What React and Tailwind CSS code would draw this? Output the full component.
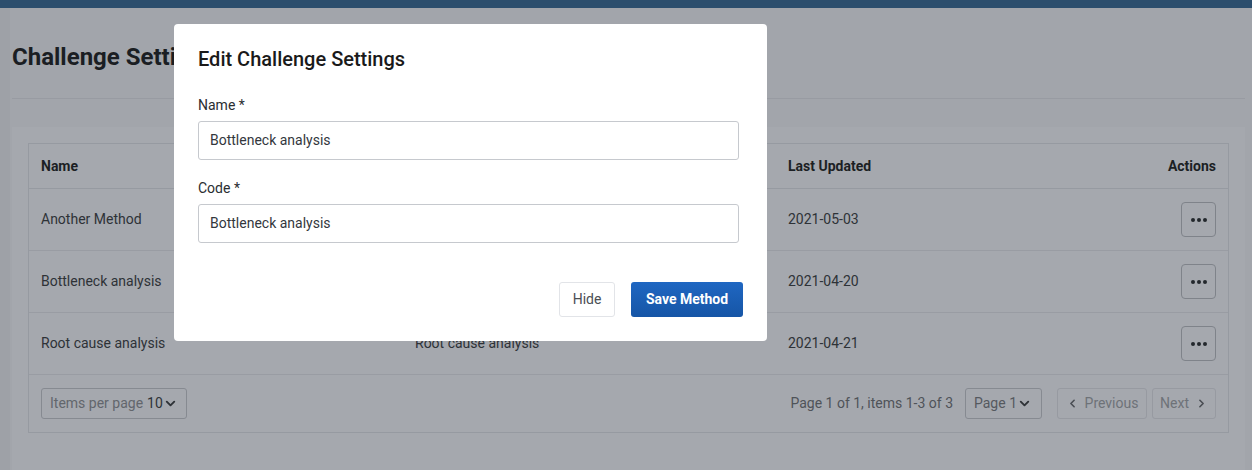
import React from "react";
import { ChevronDown, ChevronLeft, ChevronRight } from "lucide-react";

const rows = [
  { name: "Another Method", code: "Another Method", date: "2021-05-03" },
  { name: "Bottleneck analysis", code: "Bottleneck analysis", date: "2021-04-20" },
  { name: "Root cause analysis", code: "Root cause analysis", date: "2021-04-21" },
];

function Dots() {
  return (
    <button className="w-[35px] h-[35px] rounded-[4px] border border-[#7f838a] flex items-center justify-center gap-[2px]">
      <span className="w-[4px] h-[4px] rounded-full bg-[#23272c]" />
      <span className="w-[4px] h-[4px] rounded-full bg-[#23272c]" />
      <span className="w-[4px] h-[4px] rounded-full bg-[#23272c]" />
    </button>
  );
}

export default function App() {
  return (
    <div
      className="relative w-[1252px] h-[470px] overflow-hidden bg-[#a2a5ab] flex flex-col"
      style={{ fontFamily: "Roboto, 'Noto Sans', sans-serif" }}
    >
      <div className="h-[8px] bg-[#2c4e6d] shrink-0" />
      <div className="flex flex-1">
        <div className="w-[10px] bg-[#9ea1a7] shrink-0" />
        <div className="flex-1 flex flex-col pl-[2px] pr-[7px]">
          <div className="pt-[35px] pb-[27px] border-b border-[#989ba2]">
            <h1 className="text-[24px] leading-[28px] font-bold text-[#1b1e23]">
              Challenge Settings
            </h1>
          </div>
          <div className="mt-[28px] bg-[#a5a8ae] p-4 flex-1">
            <div className="border border-[#969aa1] text-[14px] text-[#2e3237]">
              <div className="h-[45px] grid grid-cols-[374px_373px_1fr_120px] items-center px-3 border-b border-[#969aa1] font-bold text-[#1c1f24]">
                <div>Name</div>
                <div>Code</div>
                <div>Last Updated</div>
                <div className="text-right">Actions</div>
              </div>
              {rows.map((r) => (
                <div
                  key={r.name}
                  className="h-[62px] grid grid-cols-[374px_373px_1fr_120px] items-center px-3 border-b border-[#999ca3]"
                >
                  <div>{r.name}</div>
                  <div>{r.code}</div>
                  <div>{r.date}</div>
                  <div className="flex justify-end">
                    <Dots />
                  </div>
                </div>
              ))}
              <div className="h-[57px] flex items-center px-3">
                <div className="h-[31px] px-[8px] border border-[#868a91] rounded-[3px] flex items-center text-[14px]">
                  <span className="text-[#62666c]">Items per page</span>
                  <span className="ml-[4px] text-[#2e3237]">10</span>
                  <ChevronDown size={15} strokeWidth={3} className="text-[#2e3237]" />
                </div>
                <div className="flex-1" />
                <span className="text-[#4f5359] mr-[12px]">Page 1 of 1, items 1-3 of 3</span>
                <div className="h-[31px] w-[77px] px-[8px] border border-[#868a91] rounded-[3px] flex items-center">
                  <span className="text-[#55595f]">Page 1</span>
                  <ChevronDown size={15} strokeWidth={3} className="text-[#2e3237]" />
                </div>
                <button className="ml-[15px] h-[31px] w-[90px] border border-[#979aa1] rounded-[3px] flex items-center justify-center gap-[6px] text-[#6e7278]">
                  <ChevronLeft size={13} strokeWidth={3} className="text-[#4a4e54]" />
                  <span>Previous</span>
                </button>
                <button className="ml-[5px] h-[31px] w-[64px] border border-[#979aa1] rounded-[3px] flex items-center justify-center gap-[6px] text-[#6e7278]">
                  <span>Next</span>
                  <ChevronRight size={13} strokeWidth={3} className="text-[#4a4e54]" />
                </button>
              </div>
            </div>
          </div>
        </div>
      </div>

      <div className="absolute left-[174px] top-[24px] w-[593px] h-[317px] bg-white rounded-[4px] pl-[24px] pr-[28px] pt-[23px]">
        <h2 className="text-[20px] leading-[24px] font-medium text-[#1a1a1a]">Edit Challenge Settings</h2>
        <label className="block mt-[25px] text-[14px] leading-[18px] text-[#2a2d31]">Name *</label>
        <div className="mt-[7px] h-[39px] border border-[#c6c9ce] rounded-[3px] px-[11px] flex items-center text-[14px] text-[#33373d]">
          Bottleneck analysis
        </div>
        <label className="block mt-[19px] text-[14px] leading-[18px] text-[#2a2d31]">Code *</label>
        <div className="mt-[7px] h-[39px] border border-[#c6c9ce] rounded-[3px] px-[11px] flex items-center text-[14px] text-[#33373d]">
          Bottleneck analysis
        </div>
        <div className="mt-[39px] flex justify-end gap-[16px] mr-[-4px]">
          <button className="h-[35px] w-[56px] border border-[#e2e4e8] rounded-[3px] text-[14px] text-[#4a4e54] bg-white">
            Hide
          </button>
          <button className="h-[35px] w-[112px] rounded-[3px] text-[14px] font-bold text-white bg-gradient-to-b from-[#1f67c2] to-[#1655a6]">
            Save Method
          </button>
        </div>
      </div>
    </div>
  );
}
